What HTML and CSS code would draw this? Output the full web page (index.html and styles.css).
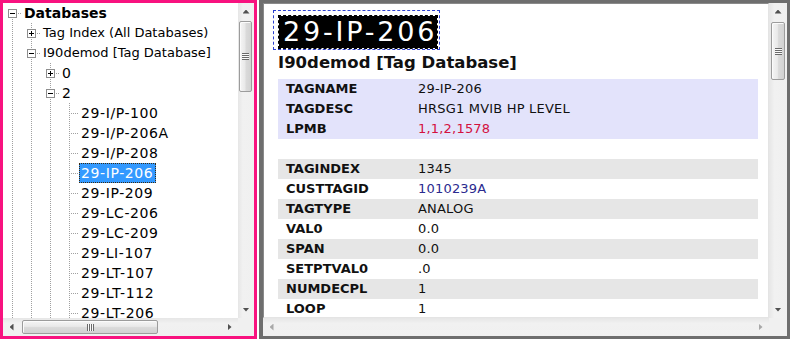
FILE: index.html
```html
<!DOCTYPE html>
<html lang="en">
<head>
  <meta charset="UTF-8" />
  <meta name="viewport" content="width=device-width, initial-scale=1.0" />
  <title>Tag Browser</title>
  <link rel="stylesheet" href="styles.css">
</head>
<body>
  <div class="app">
    <!-- left: database tree -->
    <div class="tree-pane">
      <div class="tree">
        <div class="row">
          <span class="mark root"><i class="box minus"></i></span><span class="label bold">Databases</span>
        </div>
        <div class="row small">
          <span class="guide"></span><span class="mark"><i class="box plus"></i></span><span class="label">Tag Index (All Databases)</span>
        </div>
        <div class="row small">
          <span class="guide"></span><span class="mark"><i class="box minus"></i></span><span class="label">I90demod [Tag Database]</span>
        </div>
        <div class="row">
          <span class="guide"></span><span class="guide"></span><span class="mark"><i class="box plus"></i></span><span class="label">0</span>
        </div>
        <div class="row">
          <span class="guide"></span><span class="guide"></span><span class="mark"><i class="box minus"></i></span><span class="label">2</span>
        </div>
        <div class="row leaf">
          <span class="guide"></span><span class="guide"></span><span class="guide"></span><span class="mark"></span><span class="label">29-I/P-100</span>
        </div>
        <div class="row leaf">
          <span class="guide"></span><span class="guide"></span><span class="guide"></span><span class="mark"></span><span class="label">29-I/P-206A</span>
        </div>
        <div class="row leaf">
          <span class="guide"></span><span class="guide"></span><span class="guide"></span><span class="mark"></span><span class="label">29-I/P-208</span>
        </div>
        <div class="row leaf">
          <span class="guide"></span><span class="guide"></span><span class="guide"></span><span class="mark"></span><span class="label selected">29-IP-206</span>
        </div>
        <div class="row leaf">
          <span class="guide"></span><span class="guide"></span><span class="guide"></span><span class="mark"></span><span class="label">29-IP-209</span>
        </div>
        <div class="row leaf">
          <span class="guide"></span><span class="guide"></span><span class="guide"></span><span class="mark"></span><span class="label">29-LC-206</span>
        </div>
        <div class="row leaf">
          <span class="guide"></span><span class="guide"></span><span class="guide"></span><span class="mark"></span><span class="label">29-LC-209</span>
        </div>
        <div class="row leaf">
          <span class="guide"></span><span class="guide"></span><span class="guide"></span><span class="mark"></span><span class="label">29-LI-107</span>
        </div>
        <div class="row leaf">
          <span class="guide"></span><span class="guide"></span><span class="guide"></span><span class="mark"></span><span class="label">29-LT-107</span>
        </div>
        <div class="row leaf">
          <span class="guide"></span><span class="guide"></span><span class="guide"></span><span class="mark"></span><span class="label">29-LT-112</span>
        </div>
        <div class="row leaf">
          <span class="guide"></span><span class="guide"></span><span class="guide"></span><span class="mark"></span><span class="label">29-LT-206</span>
        </div>
      </div>
      <div class="vscroll">
        <span class="sb-btn"><i class="arrow up"></i></span>
        <span class="thumb"><i class="grip"></i></span>
        <span class="track"></span>
        <span class="sb-btn"><i class="arrow down"></i></span>
      </div>
      <div class="hscroll">
        <span class="sb-btn"><i class="arrow left"></i></span>
        <span class="thumb"><i class="grip"></i></span>
        <span class="track"></span>
        <span class="sb-btn"><i class="arrow right"></i></span>
      </div>
      <div class="corner"></div>
    </div>

    <div class="split"></div>

    <!-- right: tag details -->
    <div class="detail-pane">
      <div class="content">
        <div class="title-focus"><span class="title">29-IP-206</span></div>
        <h2 class="db-name">I90demod [Tag Database]</h2>

        <table class="props key-props">
          <tr><td class="key">TAGNAME</td><td>29-IP-206</td></tr>
          <tr><td class="key">TAGDESC</td><td>HRSG1 MVIB HP LEVEL</td></tr>
          <tr><td class="key">LPMB</td><td class="red">1,1,2,1578</td></tr>
        </table>

        <table class="props striped">
          <tr><td class="key">TAGINDEX</td><td>1345</td></tr>
          <tr><td class="key">CUSTTAGID</td><td class="navy">1010239A</td></tr>
          <tr><td class="key">TAGTYPE</td><td>ANALOG</td></tr>
          <tr><td class="key">VAL0</td><td>0.0</td></tr>
          <tr><td class="key">SPAN</td><td>0.0</td></tr>
          <tr><td class="key">SETPTVAL0</td><td>.0</td></tr>
          <tr><td class="key">NUMDECPL</td><td>1</td></tr>
          <tr><td class="key">LOOP</td><td>1</td></tr>
        </table>
      </div>
      <div class="vscroll">
        <span class="sb-btn"><i class="arrow up"></i></span>
        <span class="thumb"><i class="grip"></i></span>
        <span class="track"></span>
        <span class="sb-btn"><i class="arrow down"></i></span>
      </div>
      <div class="hscroll">
        <span class="sb-btn"><i class="arrow left off"></i></span>
        <span class="track"></span>
        <span class="sb-btn"><i class="arrow right off"></i></span>
      </div>
      <div class="corner"></div>
    </div>
  </div>
</body>
</html>
```

FILE: styles.css
```css
body {
  margin: 0;
  font-family: "DejaVu Sans", sans-serif;
  background: #fff;
  color: #111;
  overflow: hidden;
}
.app {
  display: flex;
  width: 790px;
  height: 339px;
}

/* panes */
.tree-pane {
  width: 257px;
  box-sizing: border-box;
  border: 3px solid #f8127f;
  display: grid;
  grid-template-columns: 1fr 16px;
  grid-template-rows: 1fr 18px;
}
.split { width: 2px; background: #fff; }
.detail-pane {
  flex: 1;
  box-sizing: border-box;
  border: 3px solid #6e6e6e;
  border-left-width: 4px;
  display: grid;
  grid-template-columns: 1fr 18px;
  grid-template-rows: 1fr 18px;
  min-width: 0;
}

/* tree */
.tree { overflow: hidden; background: #fff; }
.row {
  display: flex;
  align-items: center;
  height: 20px;
  font-size: 14px;
  white-space: nowrap;
}
.row.small { font-size: 13px; }
.row.leaf { letter-spacing: 0.6px; }
.guide, .mark {
  position: relative;
  flex: none;
  width: 19px;
  height: 20px;
}
.guide::before, .mark::before {
  content: "";
  position: absolute;
  left: 9px;
  top: 0;
  bottom: 0;
  width: 1px;
  background: repeating-linear-gradient(to bottom, #a0a0a0 0 1px, transparent 1px 2px);
}
.mark.root::before { top: 10px; }
.mark::after {
  content: "";
  position: absolute;
  left: 10px;
  right: 1px;
  top: 10px;
  height: 1px;
  background: repeating-linear-gradient(to right, transparent 0 1px, #a0a0a0 1px 2px);
}
.box {
  position: absolute;
  left: 5px;
  top: 6px;
  width: 9px;
  height: 9px;
  box-sizing: border-box;
  border: 1px solid #8e8e8e;
  background: #fff;
  z-index: 1;
}
.box::before {
  content: "";
  position: absolute;
  left: 1px;
  top: 3px;
  width: 5px;
  height: 1px;
  background: #000;
}
.box.plus::after {
  content: "";
  position: absolute;
  left: 3px;
  top: 1px;
  width: 1px;
  height: 5px;
  background: #000;
}
.label {
  display: inline-block;
  line-height: 18px;
  border: 1px solid transparent;
  padding: 0 2px 0 1px;
  color: #000;
}
.label.bold { font-weight: bold; }
.label.selected {
  background: #3399ff;
  color: #fff;
  border: 1px dotted #3a2a10;
}

/* details */
.content {
  overflow: hidden;
  box-sizing: border-box;
  padding: 6px 0 0 9px;
  border-top: 1px solid #8a8a8a;
  border-left: 1px solid #8a8a8a;
  border-right: 1px solid #e4e4e4;
  border-bottom: 1px solid #e4e4e4;
  background: #fff;
}
.title-focus {
  display: inline-block;
  border: 1px dashed #2b3fd0;
  padding: 4px 1px 0 4px;
}
.title {
  display: block;
  background: #000;
  background-clip: padding-box;
  border: 1px dashed #000;
  color: #fff;
  font-size: 27px;
  line-height: 32px;
  letter-spacing: 2.8px;
  padding-left: 4px;
}
.db-name {
  margin: 3px 0 6px 5px;
  font-size: 16.5px;
  line-height: 20px;
  font-weight: bold;
  color: #111;
}
.props {
  width: 480px;
  margin-left: 5px;
  border-collapse: collapse;
  font-size: 13px;
}
.props td {
  height: 20px;
  padding: 0;
  line-height: 20px;
  white-space: nowrap;
  letter-spacing: 0.2px;
}
.props td.key {
  width: 132px;
  padding-left: 8px;
  font-weight: bold;
  letter-spacing: 0;
}
.key-props { background: #e3e3fb; margin-bottom: 20px; }
.striped tr:nth-child(odd) { background: #e6e6e6; }
.red { color: #d3103f; }
.navy { color: #2b2b8f; }

/* scrollbars */
.vscroll, .hscroll {
  display: flex;
  background: #efefef;
}
.vscroll {
  flex-direction: column;
  background: linear-gradient(to right, #e6e6e6, #f1f1f1 30%, #f0f0f0);
}
.hscroll {
  background: linear-gradient(to bottom, #e6e6e6, #f1f1f1 30%, #f0f0f0);
}
.sb-btn {
  flex: none;
  display: flex;
  align-items: center;
  justify-content: center;
}
.vscroll .sb-btn { height: 17px; }
.hscroll .sb-btn { width: 17px; }
.track { flex: 1; }
.arrow { display: block; background: #505050; }
.arrow.up { width: 7px; height: 4px; clip-path: polygon(50% 0, 100% 100%, 0 100%); }
.arrow.down { width: 7px; height: 4px; clip-path: polygon(0 0, 100% 0, 50% 100%); }
.arrow.left { width: 4px; height: 7px; clip-path: polygon(100% 0, 100% 100%, 0 50%); }
.arrow.right { width: 4px; height: 7px; clip-path: polygon(0 0, 100% 50%, 0 100%); }
.arrow.off { background: #a8a8a8; }
.thumb {
  flex: none;
  box-sizing: border-box;
  border: 1px solid #9c9c9c;
  border-radius: 2px;
  display: flex;
  align-items: center;
  justify-content: center;
  box-shadow: inset 1px 1px 0 #fbfbfb;
}
.vscroll .thumb {
  background: linear-gradient(to right, #f5f5f5, #e9e9e9 45%, #dadada 55%, #d2d2d2);
}
.hscroll .thumb {
  background: linear-gradient(to bottom, #f5f5f5, #e9e9e9 45%, #dadada 55%, #d2d2d2);
}
.vscroll .grip {
  width: 7px;
  height: 7px;
  background: repeating-linear-gradient(to bottom, #6a6a6a 0 1px, #fafafa 1px 2px);
}
.hscroll .grip {
  width: 7px;
  height: 7px;
  background: repeating-linear-gradient(to right, #6a6a6a 0 1px, #fafafa 1px 2px);
}
.tree-pane .vscroll .thumb { height: 71px; margin: 1px 2px 0 1px; }
.tree-pane .hscroll .thumb { width: 136px; margin: 2px 0 2px 2px; }
.detail-pane .vscroll .thumb { height: 58px; margin: 2px 2px 0 2px; }
.corner { background: #f0f0f0; }
```
